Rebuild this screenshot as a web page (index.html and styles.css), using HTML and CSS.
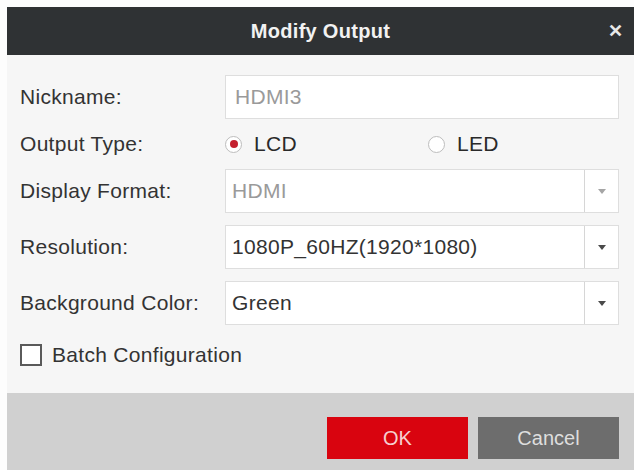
FILE: index.html
```html
<!DOCTYPE html>
<html lang="en">
<head>
  <meta charset="UTF-8">
  <title>Modify Output</title>
  <link rel="stylesheet" href="styles.css">
</head>
<body>
  <div class="dialog">
    <div class="dialog-header">
      <span class="dialog-title">Modify Output</span>
      <span class="close">&#x2715;</span>
    </div>

    <div class="dialog-body">
      <div class="form-row">
        <label class="label">Nickname:</label>
        <div class="field disabled">HDMI3</div>
      </div>

      <div class="form-row radio-row">
        <label class="label">Output Type:</label>
        <div class="radios">
          <span class="radio-item"><span class="radio checked"></span>LCD</span>
          <span class="radio-item"><span class="radio"></span>LED</span>
        </div>
      </div>

      <div class="form-row">
        <label class="label">Display Format:</label>
        <div class="field select disabled">
          <span class="value">HDMI</span>
          <span class="arrow"></span>
        </div>
      </div>

      <div class="form-row">
        <label class="label">Resolution:</label>
        <div class="field select">
          <span class="value">1080P_60HZ(1920*1080)</span>
          <span class="arrow"></span>
        </div>
      </div>

      <div class="form-row">
        <label class="label">Background Color:</label>
        <div class="field select">
          <span class="value">Green</span>
          <span class="arrow"></span>
        </div>
      </div>

      <div class="check-row">
        <span class="checkbox"></span>
        <span>Batch Configuration</span>
      </div>
    </div>

    <div class="dialog-footer">
      <button class="btn btn-ok">OK</button>
      <button class="btn btn-cancel">Cancel</button>
    </div>
  </div>
</body>
</html>
```

FILE: styles.css
```css
body {
  margin: 0;
  padding: 7px 0 0 7px;
  background: #fdfdfd;
  font-family: "Liberation Sans", Arial, sans-serif;
  color: #333;
}

.dialog {
  width: 627px;
  height: 463px;
  display: flex;
  flex-direction: column;
  background: #f6f6f6;
}

.dialog-header {
  height: 48px;
  background: #2f3234;
  color: #f2f2f2;
  display: flex;
  align-items: center;
  justify-content: center;
  position: relative;
}

.dialog-title {
  font-size: 20px;
  font-weight: bold;
  letter-spacing: 0.3px;
}

.close {
  position: absolute;
  right: 11px;
  top: 13px;
  font-size: 18px;
  font-weight: bold;
  color: #e8e8e8;
}

.dialog-body {
  padding: 20px 15px 0 13px;
  height: 318px;
  font-size: 21px;
  letter-spacing: 0.3px;
}

.form-row {
  display: grid;
  grid-template-columns: 205px 1fr;
  align-items: center;
  margin-bottom: 12px;
}

.label {
  color: #333;
}

.field {
  height: 44px;
  box-sizing: border-box;
  border: 1px solid #dedede;
  background: #fff;
  display: flex;
  align-items: center;
  padding-left: 9px;
  color: #333;
}

.field.disabled {
  color: #9a9a9a;
}

.select {
  padding-left: 0;
}

.select .value {
  flex: 1;
  padding-left: 6px;
}

.arrow {
  width: 33px;
  height: 100%;
  border-left: 1px solid #d6d6d6;
  display: flex;
  align-items: center;
  justify-content: center;
}

.arrow::after {
  content: "";
  border-left: 4px solid transparent;
  border-right: 4px solid transparent;
  border-top: 5px solid #4a4a4a;
}

.disabled .arrow::after {
  border-top-color: #a5a5a5;
}

.radio-row {
  height: 26px;
}

.radios {
  display: flex;
}

.radio-item {
  display: flex;
  align-items: center;
  gap: 12px;
  width: 203px;
  color: #2a2a2a;
}

.radio {
  width: 17px;
  height: 17px;
  box-sizing: border-box;
  border: 1px solid #bdbdbd;
  border-radius: 50%;
  background: #fff;
  display: flex;
  align-items: center;
  justify-content: center;
}

.radio.checked::after {
  content: "";
  width: 8px;
  height: 8px;
  border-radius: 50%;
  background: #c4202e;
}

.check-row {
  display: flex;
  align-items: center;
  gap: 10px;
  margin-top: 18px;
  color: #333;
}

.checkbox {
  width: 22px;
  height: 22px;
  box-sizing: border-box;
  border: 2px solid #5a5a5a;
  background: #fff;
}

.dialog-footer {
  flex: 1;
  background: #d0d0d0;
  display: flex;
  justify-content: flex-end;
  align-items: flex-start;
  gap: 10px;
  padding: 24px 15px 0 0;
}

.btn {
  width: 141px;
  height: 42px;
  border: none;
  font-family: inherit;
  font-size: 20px;
  cursor: pointer;
}

.btn-ok {
  background: #d9040f;
  color: #f6cfcf;
}

.btn-cancel {
  background: #6d6d6d;
  color: #dedede;
}
```
